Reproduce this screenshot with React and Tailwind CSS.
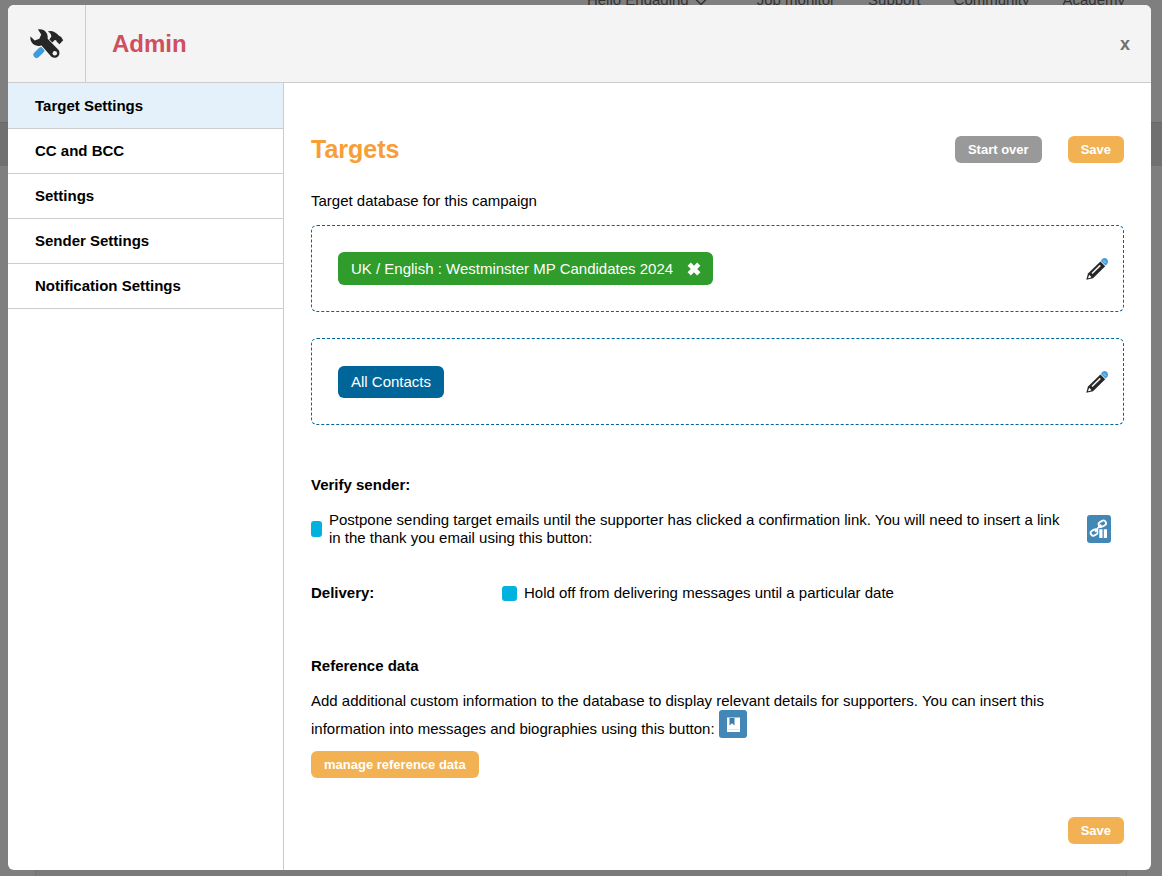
import React from "react";

const sections = ["Target Settings", "CC and BCC", "Settings", "Sender Settings", "Notification Settings"];

function ToolsIcon() {
  return (
    <svg viewBox="0 0 34 30" className="h-[30px] w-[34px]" aria-hidden="true">
      <path d="M6.600 25.800L11.200 21.300" stroke="#3f9bdc" strokeWidth="6.400" strokeLinecap="round" />
      <path
        d="M17.700 2.400C21 1.200 25 2 29.300 7L31 7.800L33.200 11.200L29.400 15.200L26.600 12.600L26.200 11.200L24.800 11L21.600 14.200L18.600 11.200L21.300 7.800C21.400 5.400 20.300 3.400 17.700 2.400Z"
        fill="#262626"
      />
      <path
        d="M8 0.600C13.500 -0.800 18.600 4 17.600 9.800L28.600 21C31.400 25.600 26.800 30.800 21.400 27.800L11.500 16.600C5.600 18.400 -0.600 14.200 0.500 7.600L4.700 11.400L9.400 9.700L11.200 5.400Z"
        fill="#262626"
        stroke="#f4f4f4"
        strokeWidth="1.600"
        paintOrder="stroke"
      />
      <circle cx="24.800" cy="24.300" r="2.200" fill="#f4f4f4" />
    </svg>
  );
}

function PencilIcon() {
  return (
    <svg viewBox="0 0 24 24" className="size-6" aria-hidden="true">
      <path d="M15.400 4.400L20.200 9.200L8 21.200L1.300 22.700L3 16.400Z" fill="#262626" />
      <path d="M4.200 17.800L6.400 20L5.400 20.800L3.300 21.200L3.100 20.800Z" fill="#fff" />
      <path d="M7 16.500L15.300 8.400" stroke="#f0f0f0" strokeWidth="1.600" />
      <path d="M15.900 4C17.100 0.800 20 0.200 21.700 1.700C23.800 3.600 23.200 6.800 20.500 8.600Z" fill="#459ddd" />
      <path d="M18.300 3.400L20.800 5.800" stroke="#7fc0ee" strokeWidth="1.400" />
    </svg>
  );
}

function LinkPauseIcon() {
  return (
    <svg viewBox="0 0 24 28" className="h-7 w-6" aria-hidden="true">
      <g fill="none" stroke="#fff" strokeWidth="1.800">
        <rect x="-3.800" y="-2.600" width="7.600" height="5.200" rx="2.600" transform="translate(7.300 17.500) rotate(-28)" />
        <rect x="-3.800" y="-2.600" width="7.600" height="5.200" rx="2.600" transform="translate(15.300 8.700) rotate(-28)" />
        <path d="M8.200 16.800L14.200 9.700" strokeWidth="2.400" />
      </g>
      <path d="M11.300 13.200H21V24H11.300Z" fill="#4287b5" />
      <path d="M12.300 14.300H15.500V23H12.300ZM16.800 14.300H20V23H16.800Z" fill="#fff" />
    </svg>
  );
}

function BookIcon() {
  return (
    <svg viewBox="0 0 28 28" className="size-7" aria-hidden="true">
      <path d="M8 7.500H21V22H8Z" fill="#fff" />
      <path d="M10.500 8H15.500V15.500L13 13.200L10.500 15.500Z" fill="#3b7ca9" />
      <path d="M9.500 19.500H19.500" stroke="#d5e4ee" strokeWidth="1" />
    </svg>
  );
}

function PillButton({ children, gray }) {
  return (
    <button
      type="button"
      className={
        "h-[27px] rounded-md px-[13px] text-[13px] leading-4 font-bold text-white " +
        (gray ? "bg-[#999999]" : "bg-[#f2b152]")
      }
    >
      {children}
    </button>
  );
}

function TargetBox({ children, label }) {
  return (
    <div className="flex h-[87px] items-center justify-between rounded-md border border-dashed border-[#006699] pr-[14px] pl-[26px]">
      {children}
      <button type="button" aria-label={label}>
        <PencilIcon />
      </button>
    </div>
  );
}

function Backdrop() {
  return (
    <div className="absolute inset-0 overflow-hidden bg-[#7f7f7f]" aria-hidden="true">
      <div className="-mt-[9px] flex h-[132px] justify-end gap-[33px] border-b border-[#686868] pr-[37px] text-[15px] leading-[18px] text-[#333]">
        <span className="mr-[17px] flex gap-1.5">
          Hello Engaging
          <svg viewBox="0 0 12 18" className="h-[18px] w-3">
            <path d="M1 8.500L6 13.500L11 8.500" fill="none" stroke="#333" strokeWidth="1.500" />
          </svg>
        </span>
        <span>Job monitor</span>
        <span>Support</span>
        <span>Community</span>
        <span>Academy</span>
      </div>
      <div className="h-[43px] bg-[#707070]" />
      <div className="mx-[35px] h-full border-x border-[#707070] bg-[#7b7b7b]" />
    </div>
  );
}

export default function App() {
  return (
    <div className="relative flex min-h-screen flex-col pt-[5px] pr-[11px] pb-1.5 pl-2 font-['Liberation_Sans',Arial,sans-serif] text-[15px] leading-[18px] text-black">
      <Backdrop />
      <div role="dialog" aria-label="Admin" className="relative flex flex-1 flex-col overflow-hidden rounded-md bg-white">
        <header className="flex h-[78px] items-stretch border-b border-[#cccccc] bg-[#f4f4f4]">
          <div className="flex w-[78px] items-center justify-center border-r border-[#cccccc]">
            <ToolsIcon />
          </div>
          <h1 className="flex flex-1 items-center pl-[26px] text-2xl font-bold text-[#cf4f5f]">Admin</h1>
          <button type="button" aria-label="Close" className="px-[21px] text-lg font-bold text-[#707070]">
            x
          </button>
        </header>

        <div className="flex flex-1">
          <nav className="w-[276px] shrink-0 border-r border-[#cccccc]">
            {sections.map((name, i) => (
              <a
                key={name}
                href="#"
                aria-current={i === 0 ? "page" : undefined}
                className={
                  "flex items-center border-b border-[#cccccc] pl-[27px] font-bold " +
                  (i === 0 ? "h-[46px] bg-[#e4f1fa]" : "h-[45px] bg-white")
                }
              >
                {name}
              </a>
            ))}
          </nav>

          <main className="min-w-0 flex-1 pt-[53px] pr-[27px] pb-[26px] pl-[27px]">
            <div className="flex items-center">
              <h2 className="flex-1 text-[25px] leading-[27px] font-bold text-[#f79e36]">Targets</h2>
              <div className="flex gap-[26px]">
                <PillButton gray>Start over</PillButton>
                <PillButton>Save</PillButton>
              </div>
            </div>

            <p className="mt-[29px]">Target database for this campaign</p>

            <div className="mt-[15px] flex flex-col gap-[26px]">
              <TargetBox label="Edit target database">
                <span className="flex h-[33px] items-center gap-3.5 rounded-md bg-[#2f9c2b] pr-3 pl-[13px] text-white">
                  UK / English : Westminster MP Candidates 2024
                  <button type="button" aria-label="Remove database">
                    <svg viewBox="0 0 14 14" className="size-3.5">
                      <path d="M2.200 2.200L11.800 11.800M11.800 2.200L2.200 11.800" stroke="#fff" strokeWidth="4.600" />
                    </svg>
                  </button>
                </span>
              </TargetBox>
              <TargetBox label="Edit contacts">
                <span className="flex h-8 items-center rounded-md bg-[#006699] px-[13px] text-white">
                  All Contacts
                </span>
              </TargetBox>
            </div>

            <h3 className="mt-[51px] font-bold">Verify sender:</h3>
            <div className="mt-[17px] flex items-center pr-[13px]">
              <input
                id="postpone"
                type="checkbox"
                className="mr-[7px] h-4 w-[11px] shrink-0 appearance-none rounded-[3px] bg-[#00b2dd]"
              />
              <label htmlFor="postpone" className="flex-1 pr-4">
                Postpone sending target emails until the supporter has clicked a confirmation link. You will need to
                insert a link in the thank you email using this button:
              </label>
              <button type="button" aria-label="Insert confirmation link" className="rounded-[3px] bg-[#4287b5]">
                <LinkPauseIcon />
              </button>
            </div>

            <div className="mt-[37px] flex items-center">
              <h3 className="w-[191px] font-bold">Delivery:</h3>
              <input
                id="hold"
                type="checkbox"
                className="mr-[7px] size-[15px] shrink-0 appearance-none rounded-[3px] bg-[#00b2dd]"
              />
              <label htmlFor="hold">Hold off from delivering messages until a particular date</label>
            </div>

            <h3 className="mt-[55px] font-bold">Reference data</h3>
            <p className="mt-[12px] pr-10 leading-7">
              Add additional custom information to the database to display relevant details for supporters. You can
              insert this information into messages and biographies using this button:{" "}
              <button
                type="button"
                aria-label="Insert reference data"
                className="-mt-2 mb-1 inline-block rounded-[3px] bg-[#4287b5] align-middle"
              >
                <BookIcon />
              </button>
            </p>
            <div className="mt-2">
              <PillButton>manage reference data</PillButton>
            </div>
            <div className="mt-[39px] flex justify-end">
              <PillButton>Save</PillButton>
            </div>
          </main>
        </div>
      </div>
    </div>
  );
}
